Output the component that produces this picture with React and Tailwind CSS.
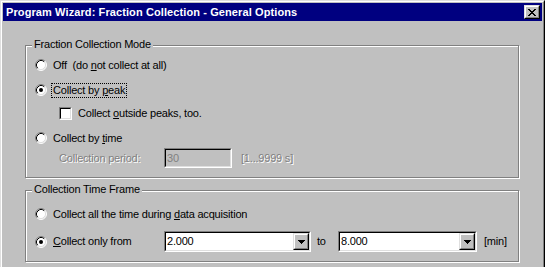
import React from "react";

function Radio({ checked }) {
  return (
    <svg width="12" height="12" viewBox="0 0 12 12" className="shrink-0">
      <circle cx="6" cy="6" r="5" fill="#fff" />
      <path d="M2.11 9.89A5.5 5.5 0 0 1 9.89 2.11" fill="none" stroke="#808080" />
      <path d="M9.89 2.11A5.5 5.5 0 0 1 2.11 9.89" fill="none" stroke="#fff" />
      <path d="M2.82 9.18A4.5 4.5 0 0 1 9.18 2.82" fill="none" stroke="#000" />
      <path d="M9.18 2.82A4.5 4.5 0 0 1 2.82 9.18" fill="none" stroke="#dfdfdf" />
      {checked && <circle cx="6" cy="6" r="2" fill="#000" />}
    </svg>
  );
}

function Sunken({ className = "", bg = "bg-white", children }) {
  return (
    <div className={`flex border border-t-[#808080] border-l-[#808080] border-r-white border-b-white ${className}`}>
      <div className={`flex flex-1 items-center border border-t-black border-l-black border-r-[#dfdfdf] border-b-[#dfdfdf] ${bg}`}>
        {children}
      </div>
    </div>
  );
}

function Raised({ className = "", children }) {
  return (
    <div className={`flex border border-t-[#dfdfdf] border-l-[#dfdfdf] border-r-black border-b-black ${className}`}>
      <div className="flex flex-1 items-center justify-center border border-t-white border-l-white border-r-[#808080] border-b-[#808080] bg-[#c0c0c0]">
        {children}
      </div>
    </div>
  );
}

function Label({ focus, children }) {
  return (
    <span
      className={`px-[1px] leading-[13px] whitespace-pre border ${
        focus ? "border-dotted border-black" : "border-transparent"
      }`}
    >
      {children}
    </span>
  );
}

function Combo({ width, value }) {
  return (
    <Sunken className={`${width} h-[21px]`}>
      <span className="flex-1 pl-[1px] leading-[13px]">{value}</span>
      <Raised className="w-[16px] h-[17px]">
        <svg width="7" height="4" viewBox="0 0 7 4" shapeRendering="crispEdges">
          <rect x="0" y="0" width="7" height="1" fill="#000" />
          <rect x="1" y="1" width="5" height="1" fill="#000" />
          <rect x="2" y="2" width="3" height="1" fill="#000" />
          <rect x="3" y="3" width="1" height="1" fill="#000" />
        </svg>
      </Raised>
    </Sunken>
  );
}

function Group({ title, className = "", children }) {
  return (
    <div
      className={`relative w-[494px] border border-[#808080] shadow-[1px_1px_0_#fff,inset_1px_1px_0_#fff] pl-[9px] ${className}`}
    >
      <span className="absolute left-[6px] -top-[8px] bg-[#c0c0c0] px-[2px] leading-[13px]">{title}</span>
      {children}
    </div>
  );
}

const closeGlyph = [
  [0, 0, 2], [6, 0, 2],
  [1, 1, 2], [5, 1, 2],
  [2, 2, 4],
  [3, 3, 2],
  [2, 4, 4],
  [1, 5, 2], [5, 5, 2],
  [0, 6, 2], [6, 6, 2],
];

export default function App() {
  return (
    <div className="w-[545px] h-[267px] overflow-hidden font-['Liberation_Sans',Arial,sans-serif] text-[11px] tracking-[-0.2px] text-black">
      <div className="h-[300px] border border-t-[#dfdfdf] border-l-[#dfdfdf] border-r-black border-b-black">
        <div className="h-full border border-t-white border-l-white border-r-[#808080] border-b-[#808080] bg-[#c0c0c0] p-[1px] flex flex-col">
          {/* Title bar */}
          <div className="h-[18px] bg-[#000080] flex items-center justify-between pl-[3px] pr-[2px]">
            <span className="text-white font-bold leading-[13px] tracking-[0.1px]">
              Program Wizard: Fraction Collection - General Options
            </span>
            <Raised className="w-[16px] h-[14px]">
              <svg width="8" height="7" viewBox="0 0 8 7" shapeRendering="crispEdges">
                {closeGlyph.map(([x, y, w], i) => (
                  <rect key={i} x={x} y={y} width={w} height="1" fill="#000" />
                ))}
              </svg>
            </Raised>
          </div>

          {/* Body */}
          <div className="flex flex-col pt-[24px] pl-[22px]">
            <Group title="Fraction Collection Mode" className="pt-[7px] pb-[9px]">
              <div className="h-[24px] flex items-center gap-[4px]">
                <Radio />
                <Label>
                  Off  (do <u>n</u>ot collect at all)
                </Label>
              </div>
              <div className="h-[26px] flex items-center gap-[4px]">
                <Radio checked />
                <Label focus>
                  Collect by <u>p</u>eak
                </Label>
              </div>
              <div className="h-[20px] flex items-center gap-[4px] pl-[24px]">
                <Sunken className="w-[13px] h-[13px] shrink-0" />
                <Label>
                  Collect <u>o</u>utside peaks, too.
                </Label>
              </div>
              <div className="mt-[5px] h-[20px] flex items-center gap-[4px]">
                <Radio />
                <Label>
                  Collect by <u>t</u>ime
                </Label>
              </div>
              <div className="h-[20px] flex items-center pl-[24px] text-[#808080]">
                <span className="w-[105px] leading-[13px] [text-shadow:1px_1px_0_#fff]">Collection period:</span>
                <Sunken className="w-[68px] h-[20px]" bg="bg-[#c0c0c0]">
                  <span className="pl-[1px] leading-[13px]">30</span>
                </Sunken>
                <span className="pl-[9px] leading-[13px] [text-shadow:1px_1px_0_#fff]">[1...9999 s]</span>
              </div>
            </Group>

            <Group title="Collection Time Frame" className="mt-[12px] pt-[13px] pb-[9px]">
              <div className="h-[20px] flex items-center gap-[4px]">
                <Radio />
                <Label>
                  Collect all the time during <u>d</u>ata acquisition
                </Label>
              </div>
              <div className="mt-[7px] h-[21px] flex items-center">
                <Radio checked />
                <span className="w-[117px] pl-[4px] flex">
                  <Label>
                    <u>C</u>ollect only from
                  </Label>
                </span>
                <Combo width="w-[147px]" value="2.000" />
                <span className="w-[27px] pl-[6px] leading-[13px]">to</span>
                <Combo width="w-[139px]" value="8.000" />
                <span className="pl-[7px] leading-[13px]">[min]</span>
              </div>
            </Group>
          </div>
        </div>
      </div>
    </div>
  );
}
